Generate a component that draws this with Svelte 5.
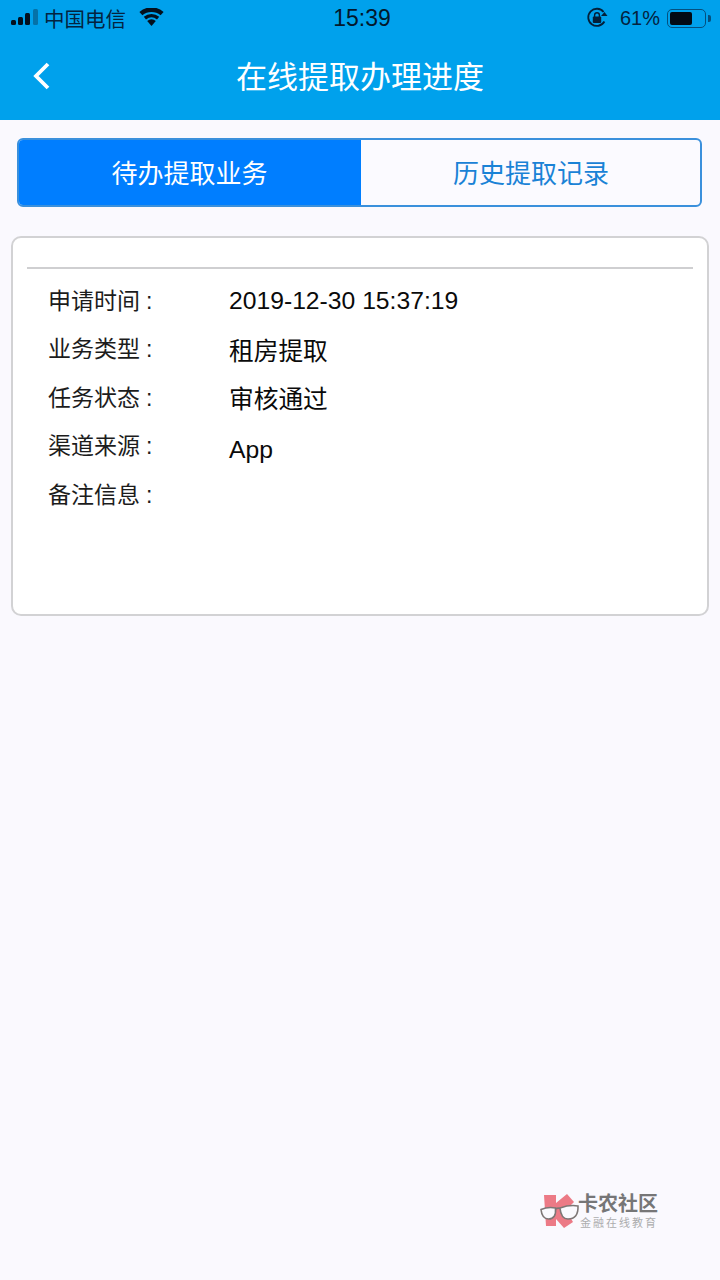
<script>
  const rows = [
    { label: '申请时间', value: '2019-12-30 15:37:19', lift: 3 },
    { label: '业务类型', value: '租房提取', lift: 3 },
    { label: '任务状态', value: '审核通过', lift: 5 },
    { label: '渠道来源', value: 'App', lift: -5 },
    { label: '备注信息', value: '', lift: 0 }
  ];
</script>

<div class="page">
  <header class="top">
    <div class="status">
      <div class="left">
        <svg class="signal" width="28" height="16" viewBox="0 0 28 16">
          <rect x="1" y="11" width="5" height="5" rx="1.5" fill="#03101e"/>
          <rect x="8" y="8" width="5" height="8" rx="1.5" fill="#03101e"/>
          <rect x="15" y="4" width="5" height="12" rx="1.5" fill="#03101e"/>
          <rect x="23" y="0" width="5" height="16" rx="1.5" fill="#0572a8"/>
        </svg>
        <span class="carrier">中国电信</span>
        <svg class="wifi" width="25" height="18" viewBox="0 0 25 18">
          <path d="M12.5 18 8.2 13a6.4 6.4 0 0 1 8.6 0Z" fill="#03101e"/>
          <path d="M7 11.4 4.8 8.8a12 12 0 0 1 15.4 0L18 11.4a9 9 0 0 0-11 0Z" fill="#03101e"/>
          <path d="M3.4 7.2.4 3.9a18.4 18.4 0 0 1 24.2 0l-3 3.3a14.4 14.4 0 0 0-18.2 0Z" fill="#03101e"/>
        </svg>
      </div>
      <span class="time">15:39</span>
      <div class="right">
        <svg class="lock" width="22" height="22" viewBox="0 0 22 22">
          <path d="M18.4 14.5A8.6 8.6 0 1 1 17.6 5" fill="none" stroke="#03203a" stroke-width="1.8"/>
          <path d="M15 9h6.5l-3-4Z" fill="#03203a"/>
          <rect x="6.800" y="9.600" width="8.400" height="6.400" rx="1" fill="#03203a"/>
          <path d="M8.600 10V8.200a2.400 2.400 0 0 1 4.800 0V10" fill="none" stroke="#03203a" stroke-width="1.400"/>
        </svg>
        <span class="pct">61%</span>
        <div class="battery"><div class="level"></div></div>
        <div class="nub"></div>
      </div>
    </div>
    <div class="nav">
      <svg class="back" width="20" height="30" viewBox="0 0 20 30">
        <path d="M18 3 6 15l12 12" fill="none" stroke="#fff" stroke-width="3.800"/>
      </svg>
      <h1>在线提取办理进度</h1>
    </div>
  </header>

  <div class="tabs">
    <div class="tab active">待办提取业务</div>
    <div class="tab">历史提取记录</div>
  </div>

  <section class="card">
    <div class="rule"></div>
    <div class="rows">
      {#each rows as r}
        <div class="row">
          <span class="label">{r.label}<span class="colon">:</span></span>
          <span class="value" style="margin-bottom: {r.lift}px">{r.value}</span>
        </div>
      {/each}
    </div>
  </section>

  <div class="spacer"></div>

  <div class="mark">
    <svg width="40" height="40" viewBox="0 0 40 40">
      <path d="M4 4h12v8L27 3l7 8-8 8 7 12-9 6-8-9v7H6Z" fill="#ec7480"/>
      <path d="M1 18.500Q8 15.500 15.500 17Q16.500 28 8.500 28Q2 28 1 18.500Z" fill="#fbfafe" stroke="#77706f" stroke-width="1.600"/>
      <path d="M20 17Q30 13.500 38 15Q38.500 28 28 28Q21 28 20 17Z" fill="#fbfafe" stroke="#77706f" stroke-width="1.600"/>
      <path d="M15.500 18Q18 16.500 20 17.500" fill="none" stroke="#77706f" stroke-width="1.600"/>
    </svg>
    <div class="mark-text">
      <div class="brand">卡农社区</div>
      <div class="sub">金融在线教育</div>
    </div>
  </div>
</div>

<style>
  :global(body) {
    margin: 0;
    background: #faf9fe;
  }
  .page {
    width: 720px;
    height: 1280px;
    display: flex;
    flex-direction: column;
    font-family: "Liberation Sans", "Noto Sans CJK SC", sans-serif;
    background: #faf9fe;
    overflow: hidden;
  }
  .top {
    height: 120px;
    background: #00a1ec;
    flex: none;
  }
  .status {
    height: 36px;
    padding: 0 9px 0 10px;
    display: flex;
    align-items: center;
    justify-content: space-between;
    position: relative;
    color: #03182c;
  }
  .left, .right {
    display: flex;
    align-items: center;
  }
  .signal { margin: 0 6px 2px 0; }
  .carrier { font-size: 20.5px; margin-right: 13px; color: #04233f; }
  .wifi { margin-bottom: 3px; }
  .time {
    position: absolute;
    left: 4px;
    right: 0;
    text-align: center;
    font-size: 23px;
    font-family: "Liberation Sans", sans-serif;
  }
  .lock { margin-right: 12px; }
  .pct { font-size: 20px; margin-right: 7px; color: #04233f; }
  .battery {
    width: 39px;
    height: 19px;
    border: 1.5px solid #04507f;
    border-radius: 5px;
    padding: 2px;
    box-sizing: border-box;
  }
  .level {
    width: 22px;
    height: 100%;
    background: #020a14;
    border-radius: 2px;
  }
  .nub {
    width: 3px;
    height: 7px;
    margin-left: 2px;
    background: #04507f;
    border-radius: 0 2px 2px 0;
  }
  .nav {
    height: 84px;
    display: flex;
    align-items: center;
    justify-content: center;
    position: relative;
  }
  .back {
    position: absolute;
    left: 30px;
    top: 25px;
  }
  h1 {
    margin: 0 0 7px;
    font-size: 31px;
    font-weight: 400;
    color: #fff;
  }
  .tabs {
    margin: 18px 18px 0 17px;
    height: 69px;
    display: flex;
    border: 2px solid #3a90dc;
    border-radius: 6px;
    box-sizing: border-box;
    overflow: hidden;
    background: #fbfaff;
    flex: none;
  }
  .tab {
    flex: 1;
    display: flex;
    align-items: center;
    justify-content: center;
    font-size: 26px;
    color: #1a82d6;
    padding: 0 0 3px 1px;
  }
  .tab.active {
    background: #007eff;
    color: #fff;
    flex: none;
    box-sizing: border-box;
    width: 344px;
    margin: -2px 0 -2px -2px;
  }
  .card {
    margin: 29px 11px 0;
    height: 380px;
    box-sizing: border-box;
    background: #fff;
    border: 2px solid #d2d2d4;
    border-radius: 10px;
    padding: 29px 14px 0;
    flex: none;
  }
  .rule {
    height: 2px;
    background: #cfcfd1;
  }
  .rows {
    padding: 9px 0 0 21px;
  }
  .row {
    height: 48.5px;
    display: flex;
    align-items: center;
    color: #0a0a0a;
  }
  .label {
    width: 181px;
    flex: none;
    font-size: 23px;
    color: #1c1c1c;
    margin-bottom: 7px;
  }
  .colon { margin-left: 6px; }
  .value {
    font-size: 24.7px;
  }
  .spacer { flex: 1; }
  .mark {
    display: flex;
    align-items: center;
    margin: 0 0 49px 540px;
    opacity: 0.95;
  }
  .mark-text { margin-left: -2px; }
  .brand {
    font-size: 20px;
    font-weight: 700;
    color: #6f6f70;
    line-height: 24px;
  }
  .sub {
    font-size: 11px;
    color: #a9a9aa;
    line-height: 14px;
    letter-spacing: 2px;
    padding-left: 2px;
  }
</style>
